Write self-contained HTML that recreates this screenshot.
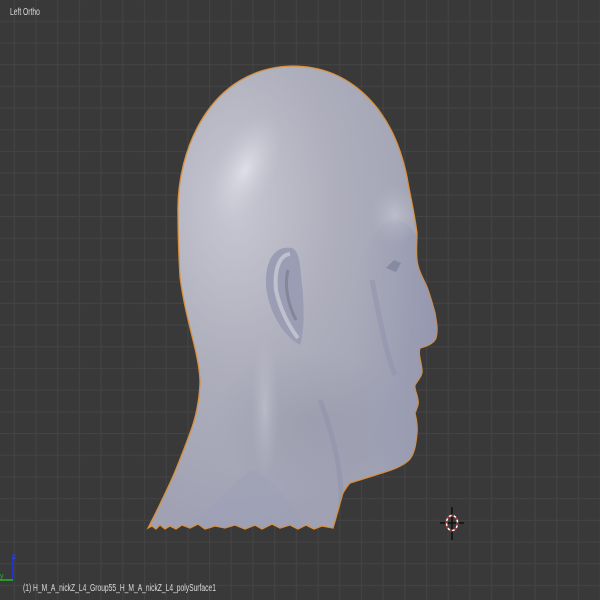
<!DOCTYPE html>
<html><head><style>
html,body{margin:0;padding:0;width:600px;height:600px;overflow:hidden;background:#393939}
.t{position:absolute;font-family:"Liberation Sans",sans-serif;font-size:10px;color:#dcdcdc;transform-origin:0 0;transform:scaleX(0.67);white-space:nowrap}
</style></head><body>
<svg width="600" height="600" style="position:absolute;left:0;top:0">
<defs>
<pattern id="g" x="-8" y="-1" width="21.7" height="21.7" patternUnits="userSpaceOnUse">
<path d="M0 0.5H21.7M0.5 0V21.7" stroke="#434343" stroke-width="1.3" fill="none"/>
</pattern>
<radialGradient id="hl" cx="0.3" cy="0.3" r="0.7">
<stop offset="0" stop-color="#c6c7d2"/><stop offset="0.5" stop-color="#aeafbc"/><stop offset="1" stop-color="#a0a2b4"/>
</radialGradient>
<radialGradient id="sp" cx="0.5" cy="0.5" r="0.5">
<stop offset="0" stop-color="#e2e3ea" stop-opacity="0.9"/><stop offset="1" stop-color="#c8c9d4" stop-opacity="0"/>
</radialGradient>
<radialGradient id="sd" cx="0.5" cy="0.5" r="0.5">
<stop offset="0" stop-color="#8a8da0" stop-opacity="0.35"/><stop offset="1" stop-color="#8a8da0" stop-opacity="0"/>
</radialGradient>
<linearGradient id="face" x1="0" y1="0" x2="1" y2="0">
<stop offset="0" stop-color="#9da0b6" stop-opacity="0"/><stop offset="1" stop-color="#8e92ad" stop-opacity="0.7"/>
</linearGradient>
</defs>
<rect width="600" height="600" fill="url(#g)"/>
<path id="head" d="M178 215 C176 150 210 68 292 66 C350 66 393 108 407 177 C410 195 414 210 417 233 C417 242 416 250 417 260 C418 270 423 278 427 287 C430 295 432 302 435 313 C437 325 438 330 436 338 C434 343 428 346 420 348 C418 354 421 360 422 370 C423 375 418 380 415 385 C414 389 417 393 418 400 C419 404 417 408 415 413 C416 418 418 425 417 433 C416 445 414 456 408 461 C402 466 395 469 385 472 C370 477 360 480 350 483 C347 486 345 490 343 493 C340 503 337 515 333 528
L322 526 L314 529 L306 525 L298 529 L290 525 L280 528 L272 524 L262 529 L255 525 L245 529 L235 525 L225 528 L215 526 L205 529 L198 524 L190 528 L182 525 L176 529 L170 526 L165 529 L160 525 L156 529 L152 526 L148 528
C155 515 162 500 170 483 C177 468 183 452 190 433 C195 420 199 405 200 383 C200 372 198 360 193 340 C188 320 183 300 180 277 C179 260 178 240 178 215 Z" fill="url(#hl)" stroke="#d9903e" stroke-width="1.3"/>
<clipPath id="c"><use href="#head"/></clipPath>
<g clip-path="url(#c)">
<ellipse cx="245" cy="170" rx="30" ry="60" fill="url(#sp)" transform="rotate(25 245 170)"/>
<ellipse cx="265" cy="410" rx="14" ry="70" fill="url(#sp)" opacity="0.5"/>
<ellipse cx="395" cy="350" rx="45" ry="130" fill="url(#face)"/>
<ellipse cx="310" cy="420" rx="100" ry="70" fill="url(#sd)"/>
<ellipse cx="395" cy="215" rx="25" ry="30" fill="url(#sp)" opacity="0.4"/>
<path d="M250 470 C280 480 300 520 310 535 L180 535 Z" fill="#9b9fb8" opacity="0.35"/>
<path d="M320 400 C335 440 345 480 340 530" stroke="#8a8ea8" stroke-width="5" fill="none" opacity="0.4"/>
<path d="M372 280 C380 320 385 350 395 375" stroke="#8c90aa" stroke-width="5" fill="none" opacity="0.45"/>
<!-- ear -->
<path d="M292 248 C275 245 265 260 266 285 C268 310 282 335 300 345 C305 330 304 300 302 285 C300 265 300 252 292 248 Z" fill="#9a9db3"/>
<path d="M290 254 C280 255 274 268 276 290 C280 310 290 328 298 338" stroke="#bfc1cf" stroke-width="4" fill="none"/>
<path d="M288 270 C284 285 288 305 296 320" stroke="#838799" stroke-width="3" fill="none"/>
<!-- eye -->
<path d="M386 268 L394 260 L401 263 L396 272 Z" fill="#878aa3"/>
</g>
<!-- 3D cursor -->
<line x1="440" y1="523" x2="464" y2="523" stroke="#111" stroke-width="1.5"/>
<line x1="452" y1="507" x2="452" y2="540" stroke="#111" stroke-width="1.5"/>
<ellipse cx="452" cy="523" rx="5.5" ry="7.5" fill="none" stroke="#fff" stroke-width="1.5"/>
<ellipse cx="452" cy="523" rx="5.5" ry="7.5" fill="none" stroke="#b22" stroke-width="1.5" stroke-dasharray="2.5 2.5"/>
<!-- axes -->
<line x1="12.5" y1="556" x2="12.5" y2="580" stroke="#2233cc" stroke-width="1.5"/>
<line x1="0" y1="580" x2="13" y2="580" stroke="#22bb22" stroke-width="1.5"/>
<text x="12" y="559" font-family="Liberation Sans" font-size="8" fill="#3344dd">z</text>
<text x="0" y="578" font-family="Liberation Sans" font-size="7" fill="#22bb22">y</text>
</svg>
<div class="t" style="left:10px;top:7px">Left Ortho</div>
<div class="t" style="left:23px;top:583px">(1) H_M_A_nickZ_L4_Group55_H_M_A_nickZ_L4_polySurface1</div>
</body></html>
